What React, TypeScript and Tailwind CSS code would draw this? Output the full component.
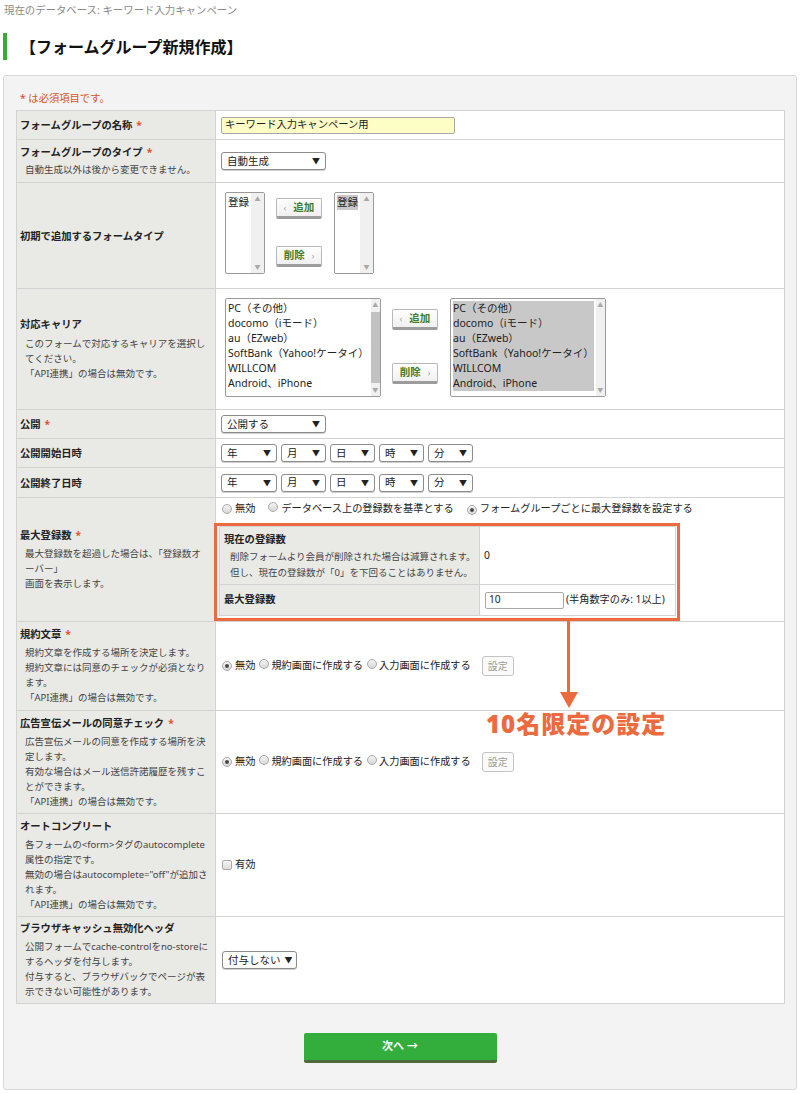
import React from "react";

const cellBorder = "border-[#d3d3d3]";

function Req() {
  return <span className="ml-[4px] text-[#e8502a]">*</span>;
}

function Label({
  title,
  req,
  desc,
  gap = "mt-[3px]",
}: {
  title: string;
  req?: boolean;
  desc?: string[];
  gap?: string;
}) {
  return (
    <div
      className={`flex w-[199px] shrink-0 flex-col justify-center border-r ${cellBorder} bg-[#e9e9e6] px-[3px]`}
    >
      <div className="text-[10.3px] font-bold leading-[14px] text-[#222]">
        {title}
        {req && <Req />}
      </div>
      {desc && (
        <div className={`${gap} pl-[5px] text-[9.5px] leading-[15px] text-[#444]`}>
          {desc.map((l) => (
            <div key={l} className="whitespace-nowrap">
              {l}
            </div>
          ))}
        </div>
      )}
    </div>
  );
}

function Row({ h, children }: { h: string; children: React.ReactNode }) {
  return <div className={`flex ${h} border-b ${cellBorder}`}>{children}</div>;
}

function Select({ label, w }: { label: string; w: string }) {
  return (
    <div
      className={`flex h-[18px] items-center justify-between rounded-[3px] border border-[#8c8c8c] bg-white pl-[5px] pr-[5px] text-[10.5px] leading-none text-[#222] shadow-[0_1px_0_#d0d0d0] ${w}`}
    >
      <span className="whitespace-nowrap">{label}</span>
      <span className="ml-[4px] text-[8px]">▼</span>
    </div>
  );
}

function Radio({ checked }: { checked?: boolean }) {
  return (
    <span className="inline-flex h-[10px] w-[10px] shrink-0 items-center justify-center rounded-full border border-[#a8a8a8] bg-gradient-to-b from-[#f4f4f4] to-[#d8d8d8]">
      {checked && <span className="h-[4px] w-[4px] rounded-full bg-[#4a4a4a]" />}
    </span>
  );
}

function MoveButton({ label, dir }: { label: string; dir: "l" | "r" }) {
  return (
    <div className="flex h-[21px] w-[46px] items-center justify-center gap-[7px] rounded-[2px] border border-[#b8b8b8] border-b-[3px] border-b-[#9c9c9c] bg-gradient-to-b from-white to-[#f0f0f0] text-[10.5px] font-bold text-[#3f7d2c]">
      {dir === "l" && <span className="text-[8px] font-normal text-[#999]">‹</span>}
      <span>{label}</span>
      {dir === "r" && <span className="text-[8px] font-normal text-[#999]">›</span>}
    </div>
  );
}

function Scrollbar({ thumb }: { thumb?: boolean }) {
  return (
    <div className="flex w-[13px] flex-col items-center bg-[#f0f0f0] py-[2px] text-[6px] leading-[8px] text-[#a8a8a8]">
      <span>▲</span>
      <div className="flex-1 py-[3px]">
        {thumb && <div className="h-full w-[9px] bg-[#c2c2c2]" />}
      </div>
      <span>▼</span>
    </div>
  );
}

function ListBox({
  items,
  w,
  h,
  selected,
  thumb,
}: {
  items: string[];
  w: string;
  h: string;
  selected?: boolean;
  thumb?: boolean;
}) {
  return (
    <div className={`flex ${w} ${h} rounded-[2px] border border-[#9a9a9a] bg-white`}>
      <div className="flex-1 p-[2px] text-[10.5px] leading-[15px] text-[#222]">
        <div className={selected ? "bg-[#c8c8c8]" : ""}>
          {items.map((i) => (
            <div key={i} className="whitespace-nowrap">
              {i}
            </div>
          ))}
        </div>
      </div>
      <Scrollbar thumb={thumb} />
    </div>
  );
}

function ConsentOptions() {
  return (
    <div className="flex items-center pl-[6px] text-[10.2px] text-[#222]">
      <Radio checked />
      <span className="ml-[3px]">無効</span>
      <span className="ml-[4px]">
        <Radio />
      </span>
      <span className="ml-[2px]">規約画面に作成する</span>
      <span className="ml-[4px]">
        <Radio />
      </span>
      <span className="ml-[2px]">入力画面に作成する</span>
      <div className="ml-[11px] flex h-[20px] w-[32px] items-center justify-center rounded-[3px] border border-[#c4c4c4] bg-[#fafafa] text-[10px] text-[#9a9a9a]">
        設定
      </div>
    </div>
  );
}

const carriers = [
  "PC（その他）",
  "docomo（iモード）",
  "au（EZweb）",
  "SoftBank（Yahoo!ケータイ）",
  "WILLCOM",
  "Android、iPhone",
];

function DateSelects() {
  return (
    <div className="flex gap-[4px]">
      <Select label="年" w="w-[56px]" />
      <Select label="月" w="w-[45px]" />
      <Select label="日" w="w-[45px]" />
      <Select label="時" w="w-[45px]" />
      <Select label="分" w="w-[45px]" />
    </div>
  );
}

export default function App() {
  return (
    <div className="relative min-h-[1094px] bg-white font-['Noto_Sans','Noto_Sans_CJK_JP',sans-serif] text-[#222]">
      <div className="h-[20px] pl-[4px] pt-[3px] text-[10.4px] leading-[14px] text-[#8a8a8a]">
        現在のデータベース: キーワード入力キャンペーン
      </div>

      <div className="ml-[3px] mt-[13px] flex h-[27px] items-center border-l-4 border-[#3aab37] pl-[13px] text-[16px] font-bold text-[#111]">
        【フォームグループ新規作成】
      </div>

      <section className="mx-[3px] mt-[15px] rounded-[3px] border border-[#d8d8d8] bg-[#f3f3f3] pb-[26px] pt-[16px]">
        <p className="pl-[16px] text-[10.3px] leading-[12px] text-[#d5561e]">
          <span className="text-[#e8402a]">*</span> は必須項目です。
        </p>

        <div className={`ml-[12px] mt-[6px] w-[769px] border-x border-t ${cellBorder} bg-white`}>
          <Row h="h-[29px]">
            <Label title="フォームグループの名称" req />
            <div className="flex flex-1 items-center pl-[5px]">
              <div className="flex h-[17px] w-[234px] items-center rounded-[2px] border border-[#a9a9a9] bg-[#fdfdc6] pl-[3px] text-[10.3px] text-[#222]">
                キーワード入力キャンペーン用
              </div>
            </div>
          </Row>

          <Row h="h-[43px]">
            <Label title="フォームグループのタイプ" req desc={["自動生成以外は後から変更できません。"]} />
            <div className="flex flex-1 items-center pl-[5px]">
              <Select label="自動生成" w="w-[105px]" />
            </div>
          </Row>

          <Row h="h-[106px]">
            <Label title="初期で追加するフォームタイプ" />
            <div className="flex flex-1 items-start pl-[9px] pt-[9px]">
              <ListBox items={["登録"]} w="w-[40px]" h="h-[82px]" />
              <div className="ml-[11px] flex flex-col gap-[27px] pt-[6px]">
                <MoveButton label="追加" dir="l" />
                <MoveButton label="削除" dir="r" />
              </div>
              <div className="ml-[12px]">
                <ListBox items={["登録"]} w="w-[40px]" h="h-[82px]" selected />
              </div>
            </div>
          </Row>

          <Row h="h-[121px]">
            <Label
              title="対応キャリア"
              gap="mt-[5px]"
              desc={["このフォームで対応するキャリアを選択し", "てください。", "「API連携」の場合は無効です。"]}
            />
            <div className="flex flex-1 items-start pl-[9px] pt-[9px]">
              <ListBox items={carriers} w="w-[156px]" h="h-[99px]" thumb />
              <div className="ml-[11px] flex flex-col gap-[33px] pt-[11px]">
                <MoveButton label="追加" dir="l" />
                <MoveButton label="削除" dir="r" />
              </div>
              <div className="ml-[12px]">
                <ListBox items={carriers} w="w-[156px]" h="h-[99px]" selected />
              </div>
            </div>
          </Row>

          <Row h="h-[29px]">
            <Label title="公開" req />
            <div className="flex flex-1 items-center pl-[5px]">
              <Select label="公開する" w="w-[105px]" />
            </div>
          </Row>

          <Row h="h-[29px]">
            <Label title="公開開始日時" />
            <div className="flex flex-1 items-center pl-[5px]">
              <DateSelects />
            </div>
          </Row>

          <Row h="h-[30px]">
            <Label title="公開終了日時" />
            <div className="flex flex-1 items-center pl-[5px]">
              <DateSelects />
            </div>
          </Row>

          <Row h="h-[124px]">
            <Label
              title="最大登録数"
              req
              gap="mt-[4px]"
              desc={["最大登録数を超過した場合は、「登録数オ", "ーバー」", "画面を表示します。"]}
            />
            <div className="flex flex-1 flex-col pt-[4px]">
              <div className="flex h-[14px] items-center pl-[6px] text-[10.2px]">
                <Radio />
                <span className="ml-[3px]">無効</span>
                <span className="ml-[13px]">
                  <Radio />
                </span>
                <span className="ml-[3px]">データベース上の登録数を基準とする</span>
                <span className="ml-[13px]">
                  <Radio checked />
                </span>
                <span className="ml-[3px]">フォームグループごとに最大登録数を設定する</span>
              </div>

              <div className="relative ml-[3px] mt-[10px] w-[457px]">
                <div className={`border ${cellBorder}`}>
                  <div className={`flex h-[58px] border-b ${cellBorder}`}>
                    <div className={`w-[260px] border-r ${cellBorder} bg-[#e9e9e6] pl-[4px] pt-[5px]`}>
                      <div className="text-[10.3px] font-bold leading-[14px]">現在の登録数</div>
                      <div className="mt-[3px] pl-[6px] text-[9.5px] leading-[16px] text-[#444]">
                        <div className="whitespace-nowrap">削除フォームより会員が削除された場合は減算されます。</div>
                        <div className="whitespace-nowrap">但し、現在の登録数が「0」を下回ることはありません。</div>
                      </div>
                    </div>
                    <div className="flex flex-1 items-center pl-[4px] text-[10.3px]">0</div>
                  </div>
                  <div className="flex h-[30px]">
                    <div className={`flex w-[260px] items-center border-r ${cellBorder} bg-[#e9e9e6] pl-[4px] text-[10.3px] font-bold`}>
                      最大登録数
                    </div>
                    <div className="flex flex-1 items-center pl-[5px] text-[10.2px]">
                      <div className="flex h-[17px] w-[79px] items-center rounded-[2px] border border-[#a9a9a9] bg-white pl-[3px]">
                        10
                      </div>
                      <span className="ml-[2px]">(半角数字のみ: 1以上)</span>
                    </div>
                  </div>
                </div>
                <div className="pointer-events-none absolute -bottom-[5px] -left-[5px] -right-[4px] -top-[3px] border-[3px] border-[#ec6a3d]" />
              </div>
            </div>
          </Row>

          <Row h="h-[89px]">
            <Label
              title="規約文章"
              req
              gap="mt-[4px]"
              desc={[
                "規約文章を作成する場所を決定します。",
                "規約文章には同意のチェックが必須となり",
                "ます。",
                "「API連携」の場合は無効です。",
              ]}
            />
            <div className="flex flex-1 items-center">
              <ConsentOptions />
            </div>
          </Row>

          <Row h="h-[103px]">
            <Label
              title="広告宣伝メールの同意チェック"
              req
              gap="mt-[4px]"
              desc={[
                "広告宣伝メールの同意を作成する場所を決",
                "定します。",
                "有効な場合はメール送信許諾履歴を残すこ",
                "とができます。",
                "「API連携」の場合は無効です。",
              ]}
            />
            <div className="flex flex-1 items-center">
              <ConsentOptions />
            </div>
          </Row>

          <Row h="h-[103px]">
            <Label
              title="オートコンプリート"
              gap="mt-[4px]"
              desc={[
                "各フォームの<form>タグのautocomplete",
                "属性の指定です。",
                '無効の場合はautocomplete="off"が追加さ',
                "れます。",
                "「API連携」の場合は無効です。",
              ]}
            />
            <div className="flex flex-1 items-center pl-[6px] text-[10.2px]">
              <span className="h-[10px] w-[10px] rounded-[2px] border border-[#a8a8a8] bg-gradient-to-b from-[#f4f4f4] to-[#dcdcdc]" />
              <span className="ml-[3px]">有効</span>
            </div>
          </Row>

          <Row h="h-[87px]">
            <Label
              title="ブラウザキャッシュ無効化ヘッダ"
              gap="mt-[4px]"
              desc={[
                "公開フォームでcache-controlをno-storeに",
                "するヘッダを付与します。",
                "付与すると、ブラウザバックでページが表",
                "示できない可能性があります。",
              ]}
            />
            <div className="flex flex-1 items-center pl-[6px]">
              <Select label="付与しない" w="w-[75px]" />
            </div>
          </Row>
        </div>

        <div className="mt-[29px] flex justify-center">
          <button className="h-[30px] w-[193px] rounded-[2px] border-b-[3px] border-[#4d6b3c] bg-[#33ae3d] text-[11px] font-bold text-white">
            次へ →
          </button>
        </div>
      </section>

      {/* annotation over the form */}
      <div className="pointer-events-none absolute left-[559px] top-[618px] flex w-[19px] flex-col items-center">
        <div className="h-[74px] w-[3px] bg-[#ec6a3d]" />
        <div className="h-0 w-0 border-x-[9px] border-t-[16px] border-x-transparent border-t-[#ec6a3d]" />
      </div>
      <div className="pointer-events-none absolute left-[486px] top-[708px] text-[24px] font-black leading-[32px] tracking-[1px] text-[#ec6a3d]">
        10名限定の設定
      </div>
    </div>
  );
}
